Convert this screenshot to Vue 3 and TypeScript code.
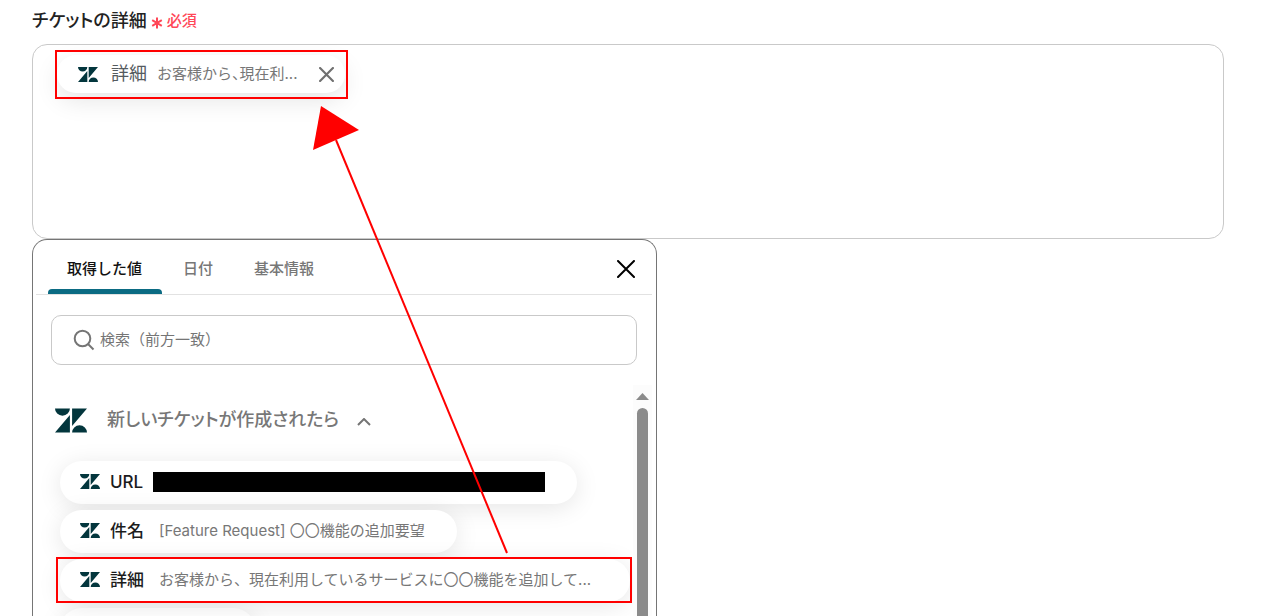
<script setup lang="ts">
import { defineComponent, h, ref } from 'vue'

interface TicketValue {
  label: string
  value?: string
  redacted?: boolean
  highlighted?: boolean
  wide?: boolean
}

const tabs: string[] = ['取得した値', '日付', '基本情報']
const activeTab = ref<number>(0)
const query = ref<string>('')
const expanded = ref<boolean>(true)

const values: TicketValue[] = [
  { label: 'URL', redacted: true },
  { label: '件名', value: '[Feature Request] 〇〇機能の追加要望' },
  { label: '詳細', value: 'お客様から、現在利用しているサービスに〇〇機能を追加して...', highlighted: true, wide: true },
]

const BrandLogo = defineComponent({
  setup() {
    return () =>
      h('svg', { viewBox: '0 0 32 24', 'aria-hidden': 'true', fill: '#03363d' }, [
        h('path', {
          d: 'M14.9 6.5V24H0zM14.9 0A7.45 7.2 0 0 1 0 0zM17.1 24a7.45 7.2 0 0 1 14.9 0zM17.1 17.5V0H32z',
        }),
      ])
  },
})
</script>

<template>
  <main class="page">
    <h1 class="field-title">チケットの詳細 <span class="required"><svg class="star" viewBox="0 0 12 12" aria-hidden="true"><path d="M6 0.5V11.5M1.2 3.2L10.8 8.8M10.8 3.2L1.2 8.8" /></svg>必須</span></h1>

    <section class="field" aria-label="チケットの詳細">
      <div class="chip marked">
        <BrandLogo class="logo" />
        <span class="chip-label">詳細</span>
        <span class="chip-value">お客様から、現在利...</span>
        <button class="icon-button chip-close" type="button" aria-label="削除">
          <svg viewBox="0 0 14 14"><path d="M1 1L13 13M13 1L1 13" /></svg>
        </button>
      </div>
    </section>

    <section class="panel">
      <header class="panel-head">
        <nav class="tabs">
          <button
            v-for="(tab, i) in tabs"
            :key="tab"
            type="button"
            class="tab"
            :class="{ active: i === activeTab }"
            @click="activeTab = i"
          >{{ tab }}</button>
        </nav>
        <button class="icon-button panel-close" type="button" aria-label="閉じる">
          <svg viewBox="0 0 18 18"><path d="M1 1L17 17M17 1L1 17" /></svg>
        </button>
      </header>

      <label class="search">
        <svg viewBox="0 0 22 22" aria-hidden="true"><circle cx="9.5" cy="9.5" r="7.8" /><path d="M15 15L20.5 20.5" /></svg>
        <input v-model="query" type="text" placeholder="検索（前方一致）" aria-label="検索（前方一致）" />
      </label>

      <div class="results">
        <div class="results-main">
          <button class="group" type="button" :aria-expanded="expanded" @click="expanded = !expanded">
            <BrandLogo class="logo-large" />
            <span>新しいチケットが作成されたら</span>
            <svg class="caret" viewBox="0 0 14 8" aria-hidden="true"><path d="M1 7L7 1L13 7" /></svg>
          </button>
          <ul v-if="expanded" class="list">
            <li v-for="item in values" :key="item.label" :class="{ marked: item.highlighted, wide: item.wide }">
              <button class="pill" type="button">
                <BrandLogo class="logo" />
                <span class="pill-label">{{ item.label }}</span>
                <span v-if="item.redacted" class="redacted"></span>
                <span v-else class="pill-value">{{ item.value }}</span>
              </button>
            </li>
            <li class="next"><div class="pill"></div></li>
          </ul>
        </div>
        <div class="scrollbar" aria-hidden="true">
          <svg viewBox="0 0 13 7"><path d="M0 7L6.5 0L13 7z" /></svg>
          <div class="thumb"></div>
        </div>
      </div>
    </section>

    <svg class="arrow" aria-hidden="true">
      <path class="arrow-line" d="M507 553L336 140" />
      <path class="arrow-head" d="M321 106L359 130L313 150z" />
    </svg>
  </main>
</template>

<style>
body {
  background: #fff;
}
</style>

<style scoped>
.page {
  position: relative;
  box-sizing: border-box;
  height: 100vh;
  overflow: hidden;
  padding: 9px 52px 0 32px;
  display: flex;
  flex-direction: column;
  font-family: Inter, "Noto Sans CJK JP", sans-serif;
  color: #222;
}

button,
input {
  font-family: inherit;
  border: 0;
  background: none;
  padding: 0;
  margin: 0;
}

.field-title {
  display: flex;
  align-items: center;
  gap: 4px;
  margin: 0 0 11px;
  font-size: 18px;
  line-height: 24px;
  font-weight: 500;
  font-feature-settings: "palt";
}

.required {
  display: flex;
  align-items: center;
  gap: 4px;
  color: #ff4757;
  font-size: 15px;
}

.star {
  width: 12px;
  height: 12px;
  margin-top: 3px;
  fill: none;
  stroke: #ff4757;
  stroke-width: 2;
}

.field {
  flex: none;
  box-sizing: border-box;
  height: 195px;
  border: 1px solid #c9c9c9;
  border-radius: 15px;
  padding: 10px 24px;
  overflow: hidden;
}

.chip {
  display: inline-flex;
  align-items: center;
  box-sizing: border-box;
  height: 38px;
  padding: 0 11px 0 21px;
  border-radius: 19px;
  background: #fff;
  box-shadow: 0 8px 24px rgba(0, 0, 0, 0.1);
}

.marked {
  position: relative;
}

.marked::after {
  content: "";
  position: absolute;
  inset: -5px -3px -6px -2px;
  border: 2px solid #f00;
  pointer-events: none;
}

.logo {
  flex: none;
  width: 20px;
  height: 15px;
}

.chip-label {
  margin-left: 13px;
  font-size: 18px;
  line-height: 24px;
  color: #555b5f;
}

.chip-value {
  margin-left: 10px;
  font-size: 15px;
  line-height: 24px;
  color: #777;
  font-feature-settings: "halt";
}

.icon-button {
  display: flex;
  cursor: pointer;
}

.icon-button svg {
  fill: none;
  stroke: currentColor;
  stroke-width: 2;
  stroke-linecap: round;
}

.chip-close {
  margin-left: 22px;
  color: #707070;
}

.chip-close svg {
  width: 15px;
  height: 15px;
}

.panel {
  flex: 1;
  min-height: 0;
  box-sizing: border-box;
  width: 100%;
  max-width: 625px;
  display: flex;
  flex-direction: column;
  border: 1px solid #757575;
  border-bottom: 0;
  border-radius: 15px 15px 0 0;
  background: #fff;
}

.panel-head {
  display: flex;
  align-items: center;
  justify-content: space-between;
  margin: 0 4px 0 3px;
  padding: 0 17px 0 12px;
  border-bottom: 1px solid #e2e2e2;
}

.tabs {
  display: flex;
  gap: 2px;
}

.tab {
  position: relative;
  height: 54px;
  padding: 3px 20px 0 19px;
  font-size: 15px;
  line-height: 24px;
  font-weight: 500;
  color: #777;
  cursor: pointer;
}

.tab.active {
  color: #111;
}

.tab.active::after {
  content: "";
  position: absolute;
  inset: auto 0 0;
  height: 5px;
  border-radius: 4px 4px 0 0;
  background: #0b6b83;
}

.panel-close {
  margin-top: 4px;
  color: #000;
}

.panel-close svg {
  width: 18px;
  height: 18px;
}

.search {
  display: flex;
  align-items: center;
  gap: 5px;
  box-sizing: border-box;
  height: 50px;
  margin: 20px 19px 20px 18px;
  padding: 0 20px 0 21px;
  border: 1px solid #c9c9c9;
  border-radius: 10px;
}

.search svg {
  flex: none;
  width: 22px;
  height: 22px;
  fill: none;
  stroke: #757575;
  stroke-width: 2;
}

.search input {
  flex: 1;
  min-width: 0;
  font-size: 15px;
  line-height: 24px;
  outline: none;
}

.search input::placeholder {
  color: #757575;
  opacity: 1;
}

.results {
  flex: 1;
  min-height: 0;
  display: flex;
  padding-right: 4px;
  overflow: hidden;
}

.results-main {
  flex: 1;
  min-width: 0;
  padding: 20px 0 0 22px;
  overflow: hidden;
}

.group {
  display: flex;
  align-items: center;
  height: 30px;
  font-size: 18px;
  line-height: 24px;
  font-weight: 500;
  color: #777;
  font-feature-settings: "palt";
  cursor: pointer;
}

.logo-large {
  width: 32px;
  height: 25px;
  margin-right: 20px;
}

.caret {
  width: 14px;
  height: 8px;
  margin: 3px 0 0 18px;
  fill: none;
  stroke: #757575;
  stroke-width: 2;
}

.list {
  display: flex;
  flex-direction: column;
  align-items: flex-start;
  gap: 6px;
  margin: 0;
  padding: 26px 3px 0 5px;
  list-style: none;
}

.wide {
  width: 100%;
}

.next {
  width: 195px;
}

.pill {
  display: flex;
  align-items: center;
  box-sizing: border-box;
  min-width: 100%;
  height: 43px;
  padding: 0 32px 2px 20px;
  border-radius: 22px;
  background: #fff;
  box-shadow: 0 4px 24px rgba(0, 0, 0, 0.1);
  line-height: 24px;
  white-space: nowrap;
  cursor: pointer;
}

.list .marked::after {
  inset: -2px -2px -1px -4px;
}

.pill-label {
  margin-left: 10px;
  font-size: 17px;
  font-weight: 500;
  color: #1c1c1c;
}

.pill-value {
  margin-left: 15px;
  font-size: 15px;
  color: #777;
}

.redacted {
  width: 392px;
  height: 20px;
  margin-left: 10px;
  background: #000;
}

.scrollbar {
  flex: none;
  width: 19px;
  display: flex;
  flex-direction: column;
  align-items: center;
  gap: 8px;
  padding-top: 8px;
  background: #fcfcfc;
}

.scrollbar svg {
  width: 13px;
  height: 7px;
  fill: #8b8b8b;
}

.thumb {
  flex: 1;
  width: 11px;
  border-radius: 6px 6px 0 0;
  background: #8b8b8b;
}

.arrow {
  position: absolute;
  top: 0;
  left: 0;
  width: 100%;
  height: 100%;
  pointer-events: none;
}

.arrow-line {
  stroke: #f00;
  stroke-width: 2;
}

.arrow-head {
  fill: #f00;
}
</style>
